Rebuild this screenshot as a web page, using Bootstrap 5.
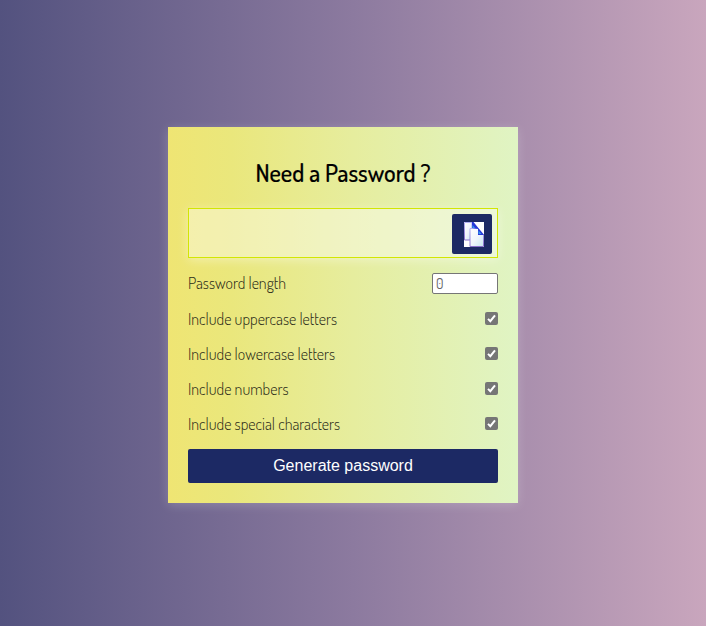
<!DOCTYPE html>
<html lang="en">
<head>
<meta charset="utf-8">
<meta name="viewport" content="width=device-width, initial-scale=1">
<title>Password Generator</title>
<link href="https://cdn.jsdelivr.net/npm/bootstrap@5.3.0/dist/css/bootstrap.min.css" rel="stylesheet">
<style>
body{background:linear-gradient(to right,#53527f,#8c7a9f 50%,#c9a6bd);padding-top:127px;padding-left:168px;height:626px;overflow:hidden;font-family:Dosis,Lato,"Open Sans",sans-serif;color:#000}
.generator{width:350px;height:376px;padding:20px;background:linear-gradient(to right,#efe573,#eae77c 18%,#e6ed9e 53%,#e0f4c4);box-shadow:0 2px 10px rgba(255,255,255,.2)}
.title{font-size:24.400px;font-weight:500;line-height:30px;margin:11px 0 20px;-webkit-text-stroke:.2px #000}
.result{height:50px;border:1px solid #d2e603;background:rgba(255,255,255,.4);background-clip:padding-box;box-shadow:0 2px 10px rgba(255,255,255,.4);padding-right:5px}
.copy{width:40px;height:40px;background:#1c2964;border-radius:2px;margin-top:1px}
.options{margin-top:8px}
.option{height:35px;font-size:16px;font-weight:300;color:#2b2b18}
.option:first-child{height:36px}
.option label{padding-bottom:2px}
.length{width:66px;height:21px;border:1px solid #767676;border-radius:2px;padding:1px 3px;margin-bottom:2px;font:400 14px/17px Dosis,Lato,sans-serif;color:#666;background:#fff}
.check{width:13px;height:13px;border-radius:2px;margin:0 0 2px;background:#767676}
.generate{height:34px;margin-top:7px;border-radius:2px;background:#1c2964;font:16px/34px "Liberation Sans",Arial,sans-serif}
</style>
</head>
<body>
<main class="generator">
  <h2 class="title text-center">Need a Password ?</h2>
  <div class="result d-flex justify-content-end align-items-center">
    <button class="copy border-0 p-0 d-flex align-items-center justify-content-center" aria-label="Copy password">
      <svg width="24" height="28" viewBox="0 0 24 28">
        <defs><linearGradient id="paper" x2="1" y2="1"><stop stop-color="#fff"/><stop offset=".5" stop-color="#f1f5fc"/><stop offset="1" stop-color="#c7e7f1"/></linearGradient>
        <linearGradient id="edge" x2="0" y2="1"><stop stop-color="#b3b0f2"/><stop offset="1" stop-color="#8a70cc"/></linearGradient></defs>
        <path fill="#fff" d="M4 2h20v25H4z"/>
        <path d="M4.500 2.500H12v17.500H4.500z" fill="url(#paper)" stroke="url(#edge)"/>
        <path d="M10 8.500h8l5.500 6v12H10z" fill="url(#paper)" stroke="url(#edge)"/>
        <path d="M12 2h1.500L24 15h-6V9l-6-1z" fill="#2838d8"/>
        <path d="M12.500 5l2.500 3h-2.500zM18.500 10.500l3 3.500h-3z" fill="#359cee"/>
      </svg>
    </button>
  </div>
  <div class="options">
    <div class="option d-flex align-items-center justify-content-between"><label for="len">Password length</label><input class="length" id="len" type="text" value="0"></div>
    <div class="option d-flex align-items-center justify-content-between"><label>Include uppercase letters</label><svg class="check" viewBox="0 0 13 13"><path d="M3 6.900l2.300 2.300L10 3.300" fill="none" stroke="#fff" stroke-width="2"/></svg></div>
    <div class="option d-flex align-items-center justify-content-between"><label>Include lowercase letters</label><svg class="check" viewBox="0 0 13 13"><path d="M3 6.900l2.300 2.300L10 3.300" fill="none" stroke="#fff" stroke-width="2"/></svg></div>
    <div class="option d-flex align-items-center justify-content-between"><label>Include numbers</label><svg class="check" viewBox="0 0 13 13"><path d="M3 6.900l2.300 2.300L10 3.300" fill="none" stroke="#fff" stroke-width="2"/></svg></div>
    <div class="option d-flex align-items-center justify-content-between"><label>Include special characters</label><svg class="check" viewBox="0 0 13 13"><path d="M3 6.900l2.300 2.300L10 3.300" fill="none" stroke="#fff" stroke-width="2"/></svg></div>
  </div>
  <button class="generate border-0 p-0 w-100 text-white text-center d-block">Generate password</button>
</main>
<script src="https://cdn.jsdelivr.net/npm/bootstrap@5.3.0/dist/js/bootstrap.bundle.min.js"></script>
</body>
</html>
